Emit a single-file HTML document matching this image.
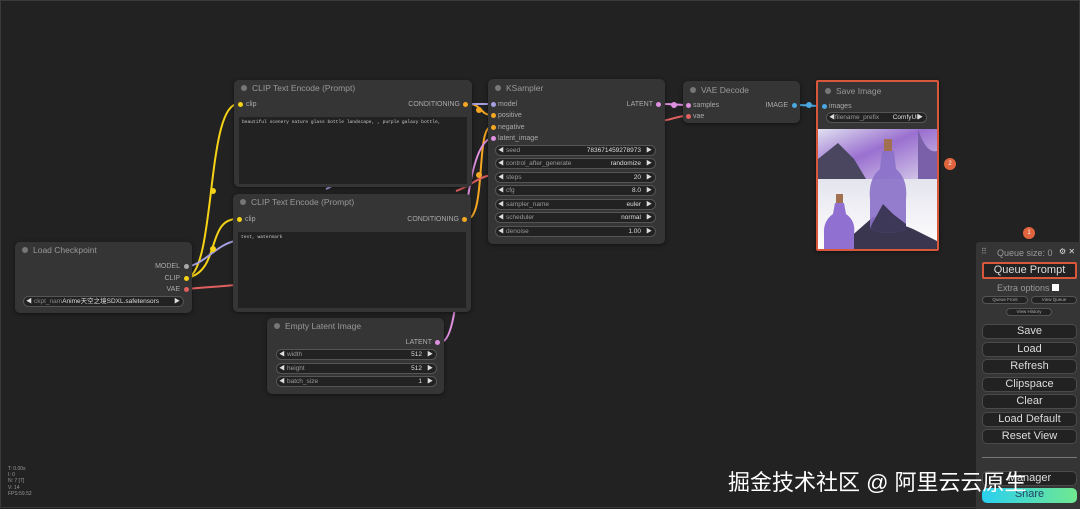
<!DOCTYPE html>
<html><head><meta charset="utf-8"><style>
*{margin:0;padding:0;box-sizing:border-box}
body{width:1080px;height:508px;overflow:hidden;background:#222;font-family:"Liberation Sans","Noto Sans CJK SC",sans-serif;position:relative;border:1px solid #3a3a3a}
.a{position:absolute}
.node{position:absolute;background:#353535;border-radius:5px;box-shadow:0 1px 4px rgba(0,0,0,.5)}
.t{position:absolute;left:18px;font-size:8.5px;color:#999;line-height:10px}
.t::before{content:"";position:absolute;left:-11px;top:2px;width:6px;height:6px;border-radius:50%;background:#777}
.l{position:absolute;font-size:7px;color:#aaa;line-height:9px;white-space:nowrap}
.d{position:absolute;width:5px;height:5px;border-radius:50%}
.w{position:absolute;height:11px;border-radius:6px;background:#222;border:1px solid #555;font-size:6.5px;color:#999;line-height:10px;padding:0 10px;white-space:nowrap}
.w::before{content:"◀";position:absolute;left:2px;color:#ddd;font-size:6px}
.w::after{content:"▶";position:absolute;right:3px;top:0;color:#ddd;font-size:6px}
.w b{position:absolute;right:14px;font-weight:normal;color:#ddd}
.ta{position:absolute;background:#222;font-family:"Liberation Mono",monospace;font-size:4.6px;color:#ccc;padding:3px 3px;white-space:nowrap;overflow:hidden}
.btn{position:absolute;left:981px;width:95px;height:15px;border:1px solid #4a4a4a;border-radius:5px;background:#222;color:#ddd;font-size:11px;text-align:center;line-height:13px}
.sb{position:absolute;height:8px;border:1px solid #555;border-radius:4px;background:#222;color:#aaa;font-size:4.5px;text-align:center;line-height:6px}
</style></head><body>
<svg class="a" style="left:0;top:0" width="1080" height="508">
<g fill="none" stroke-width="2">
<path d="M186 277 C215 270 205 103 237 103" stroke="#f5d215"/>
<path d="M186 277 C220 270 205 218 236 218" stroke="#f5d215"/>
<path d="M186 266 C205 262 215 244 234 240" stroke="#a5a0e0"/>
<path d="M186 288 C205 286 215 286 234 284" stroke="#e06060"/>
<path d="M468 103 C480 103 480 114 490 114" stroke="#f5a623"/>
<path d="M466 218 C485 218 475 126 490 126" stroke="#f5a623"/>
<path d="M470 103 C480 103 482 103 490 103" stroke="#a5a0e0"/>
<path d="M440 341 C465 340 455 150 490 137" stroke="#e090e0"/>
<path d="M455 190 C470 185 475 177 490 174" stroke="#e06060"/>
<path d="M325 188 C330 186 332 184 336 182" stroke="#a5a0e0"/>
<path d="M660 103 C675 103 675 104 686 104" stroke="#e090e0"/>
<path d="M660 120 C675 118 675 115 686 115" stroke="#e06060"/>
<path d="M795 104 C805 104 810 105 821 105" stroke="#4aa8e0"/>
</g>
<g fill="#f5d215"><circle cx="212" cy="190" r="3"/><circle cx="212" cy="248" r="3"/></g>
<circle cx="478" cy="174" r="3" fill="#f5a623"/><circle cx="478" cy="109" r="3" fill="#f5a623"/>
<circle cx="673" cy="104" r="3" fill="#e090e0"/><circle cx="808" cy="104" r="3" fill="#4aa8e0"/>
</svg>

<div class="node" style="left:233px;top:79px;width:238px;height:107px">
<div class="t" style="top:3px">CLIP Text Encode (Prompt)</div>
<div class="d" style="left:4px;top:22px;background:#f5d215"></div><div class="l" style="left:12px;top:20px">clip</div>
<div class="l" style="right:12px;top:20px">CONDITIONING</div><div class="d" style="right:4px;top:22px;background:#f5a623"></div>
<div class="ta" style="left:5px;top:37px;width:228px;height:67px">beautiful scenery nature glass bottle landscape, , purple galaxy bottle,</div>
</div>
<div class="node" style="left:232px;top:193px;width:238px;height:118px">
<div class="t" style="top:3px">CLIP Text Encode (Prompt)</div>
<div class="d" style="left:4px;top:23px;background:#f5d215"></div><div class="l" style="left:12px;top:21px">clip</div>
<div class="l" style="right:12px;top:21px">CONDITIONING</div><div class="d" style="right:4px;top:23px;background:#f5a623"></div>
<div class="ta" style="left:5px;top:38px;width:228px;height:76px">text, watermark</div>
</div>
<div class="node" style="left:14px;top:241px;width:177px;height:71px">
<div class="t" style="top:3px">Load Checkpoint</div>
<div class="l" style="right:12px;top:20px">MODEL</div><div class="d" style="right:3px;top:22px;background:#aaa"></div>
<div class="l" style="right:12px;top:32px">CLIP</div><div class="d" style="right:3px;top:34px;background:#f5d215"></div>
<div class="l" style="right:12px;top:43px">VAE</div><div class="d" style="right:3px;top:45px;background:#e06060"></div>
<div class="w" style="left:8px;top:54px;width:161px;padding-left:10px"><span style="color:#888">ckpt_nam</span><span style="color:#ddd">Anime天空之境SDXL.safetensors</span></div>
</div>
<div class="node" style="left:266px;top:317px;width:177px;height:76px">
<div class="t" style="top:3px">Empty Latent Image</div>
<div class="l" style="right:12px;top:20px">LATENT</div><div class="d" style="right:4px;top:22px;background:#e090e0"></div>
<div class="w" style="left:9px;top:31px;width:161px">width<b>512</b></div>
<div class="w" style="left:9px;top:45px;width:161px">height<b>512</b></div>
<div class="w" style="left:9px;top:58px;width:161px">batch_size<b>1</b></div>
</div>
<div class="node" style="left:487px;top:78px;width:177px;height:165px">
<div class="t" style="top:4px">KSampler</div>
<div class="d" style="left:3px;top:23px;background:#a5a0e0"></div><div class="l" style="left:10px;top:21px">model</div>
<div class="d" style="left:3px;top:34px;background:#f5a623"></div><div class="l" style="left:10px;top:32px">positive</div>
<div class="d" style="left:3px;top:46px;background:#f5a623"></div><div class="l" style="left:10px;top:44px">negative</div>
<div class="d" style="left:3px;top:57px;background:#e090e0"></div><div class="l" style="left:10px;top:55px">latent_image</div>
<div class="l" style="right:12px;top:21px">LATENT</div><div class="d" style="right:4px;top:23px;background:#e090e0"></div>
<div class="w" style="left:7px;top:66px;width:161px">seed<b>783671459278973</b></div>
<div class="w" style="left:7px;top:79px;width:161px">control_after_generate<b>randomize</b></div>
<div class="w" style="left:7px;top:93px;width:161px">steps<b>20</b></div>
<div class="w" style="left:7px;top:106px;width:161px">cfg<b>8.0</b></div>
<div class="w" style="left:7px;top:120px;width:161px">sampler_name<b>euler</b></div>
<div class="w" style="left:7px;top:133px;width:161px">scheduler<b>normal</b></div>
<div class="w" style="left:7px;top:147px;width:161px">denoise<b>1.00</b></div>
</div>
<div class="node" style="left:682px;top:80px;width:117px;height:42px">
<div class="t" style="top:4px">VAE Decode</div>
<div class="d" style="left:3px;top:22px;background:#e090e0"></div><div class="l" style="left:10px;top:20px">samples</div>
<div class="d" style="left:3px;top:33px;background:#e06060"></div><div class="l" style="left:10px;top:31px">vae</div>
<div class="l" style="right:12px;top:20px">IMAGE</div><div class="d" style="right:3px;top:22px;background:#4aa8e0"></div>
</div>
<div class="node" style="left:815px;top:79px;width:123px;height:171px;border:2px solid #d9573a;border-radius:2px">
<div class="t" style="top:4px">Save Image</div>
<div class="d" style="left:4px;top:22px;background:#4aa8e0"></div><div class="l" style="left:11px;top:20px">images</div>
<div class="w" style="left:8px;top:30px;width:101px;padding-left:8px">filename_prefix<b style="right:8px">ComfyUI</b></div>
<svg class="a" style="left:0;top:47px" width="119" height="120">
<defs><linearGradient id="s1" x1="0" y1="0" x2="1" y2="1"><stop offset="0" stop-color="#e0e0f0"/><stop offset=".45" stop-color="#9a70d0"/><stop offset="1" stop-color="#d8d0ea"/></linearGradient>
<linearGradient id="s2" x1="0" y1="0" x2="0" y2="1"><stop offset="0" stop-color="#e4e4ee"/><stop offset="1" stop-color="#fff"/></linearGradient></defs>
<rect width="119" height="120" fill="#f4f4f8"/>
<rect width="119" height="50" fill="url(#s1)"/>
<path d="M0 30 L20 14 L36 30 L48 50 L0 50Z" fill="#4a4660"/>
<path d="M100 0 Q108 25 119 22 L119 50 L100 50Z" fill="#7a60a8"/>
<rect x="0" y="50" width="119" height="70" fill="url(#s2)"/>
<path d="M30 110 L55 88 L75 92 L95 100 L119 112 L119 120 L25 120Z" fill="#3a3650"/>
<rect x="66" y="10" width="8" height="12" fill="#a07050"/>
<path d="M64 22 L76 22 L78 40 Q90 50 88 70 L88 100 Q70 108 52 100 L52 70 Q50 50 62 40Z" fill="#8a70c8" opacity=".9"/>
<path d="M54 95 L65 75 L75 85 L88 95 L88 100 Q70 108 52 100Z" fill="#3e3858"/>
<rect x="18" y="65" width="7" height="9" fill="#a07050"/>
<path d="M17 74 L26 74 L28 85 Q38 92 36 105 L36 120 L6 120 L6 105 Q5 92 15 85Z" fill="#9070d0"/>
</svg>
</div>
<div class="a" style="left:943px;top:157px;width:12px;height:12px;border-radius:50%;background:#e0643e;color:#fff;font-size:6px;text-align:center;line-height:12px">2</div>
<div class="a" style="left:1022px;top:226px;width:12px;height:12px;border-radius:50%;background:#e0643e;color:#fff;font-size:6px;text-align:center;line-height:12px">1</div>
<div class="a" style="left:975px;top:241px;width:105px;height:267px;background:#353535;border-radius:3px 0 0 0"></div>
<div class="a" style="left:980px;top:246px;font-size:8px;color:#999">⠿</div>
<div class="a" style="left:996px;top:247px;font-size:9px;color:#999">Queue size: 0</div>
<div class="a" style="left:1058px;top:246px;font-size:8px;color:#ddd">⚙ ✕</div>
<div class="btn" style="top:261px;height:17px;border:2px solid #d9573a;border-radius:2px;line-height:13px">Queue Prompt</div>
<div class="a" style="left:996px;top:282px;font-size:9px;color:#999">Extra options</div>
<div class="a" style="left:1051px;top:283px;width:7px;height:7px;background:#fff"></div>
<div class="sb" style="left:981px;top:295px;width:46px">Queue Front</div>
<div class="sb" style="left:1030px;top:295px;width:46px">View Queue</div>
<div class="sb" style="left:1005px;top:307px;width:46px">View History</div>
<div class="btn" style="top:323px">Save</div>
<div class="btn" style="top:341px">Load</div>
<div class="btn" style="top:358px">Refresh</div>
<div class="btn" style="top:376px">Clipspace</div>
<div class="btn" style="top:393px">Clear</div>
<div class="btn" style="top:411px">Load Default</div>
<div class="btn" style="top:428px">Reset View</div>
<div class="a" style="left:981px;top:456px;width:95px;height:1px;background:#777"></div>
<div class="btn" style="top:470px">Manager</div>
<div class="btn" style="top:487px;border:none;background:linear-gradient(90deg,#2ad0f0,#70e890);color:#246">Share</div>
<div class="a" style="left:727px;top:464px;font-size:22px;color:#fff;white-space:nowrap">掘金技术社区 @ 阿里云云原生</div>
<div class="a" style="left:7px;top:465px;font-size:5px;color:#999;line-height:6.2px">T: 0.00s<br>I: 0<br>N: 7 [7]<br>V: 14<br>FPS:59.52</div>
</body></html>
